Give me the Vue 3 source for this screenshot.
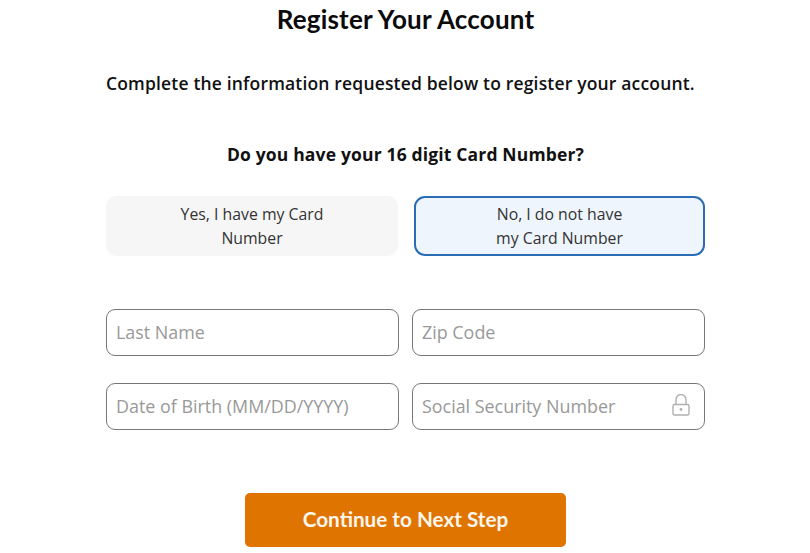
<template>
  <main class="page">
    <h1 class="title">Register Your Account</h1>
    <p class="intro">Complete the information requested below to register your account.</p>
    <h2 class="question">Do you have your 16 digit Card Number?</h2>

    <div class="choices">
      <button type="button" class="choice">Yes, I have my Card<br />Number</button>
      <button type="button" class="choice selected">No, I do not have<br />my Card Number</button>
    </div>

    <form class="fields" @submit.prevent>
      <div v-for="field in fields" :key="field" class="field">
        <input type="text" :placeholder="field" />
        <svg v-if="field === 'Social Security Number'" class="lock" viewBox="0 0 18 22" fill="none">
          <path d="M4 10.5V5.5a5 5 0 0 1 10 0v5" />
          <rect x="1" y="10.5" width="16" height="10.5" rx="1.5" />
          <circle class="dot" cx="9" cy="15.5" r="1.4" />
        </svg>
      </div>
    </form>

    <button type="button" class="next">Continue to Next Step</button>
  </main>
</template>

<script setup>
const fields = ['Last Name', 'Zip Code', 'Date of Birth (MM/DD/YYYY)', 'Social Security Number'];
</script>

<style>
body {
  background: #fff;
}
</style>

<style scoped>
.page {
  width: 599px;
  height: 553px;
  margin-left: 106px;
  overflow: hidden;
  display: flex;
  flex-direction: column;
  align-items: center;
  font-family: "Open Sans", "Liberation Sans", sans-serif;
  color: #111;
}

.title {
  margin: 3px 0 0;
  font-family: Lato, "Open Sans", sans-serif;
  font-size: 26px;
  line-height: 32px;
  font-weight: 700;
  letter-spacing: 0.2px;
  color: #0b0b0b;
}

.intro {
  align-self: flex-start;
  margin: 36px 0 0;
  font-size: 17.5px;
  line-height: 24px;
  font-weight: 600;
  letter-spacing: 0.17px;
  white-space: nowrap;
}

.question {
  margin: 47px 0 0;
  font-size: 17.5px;
  line-height: 24px;
  font-weight: 700;
  letter-spacing: 0.16px;
}

.choices {
  width: 100%;
  margin-top: 30px;
  display: grid;
  grid-template-columns: 292px 291px;
  justify-content: space-between;
}

.choice {
  height: 60px;
  padding: 0;
  border: 2px solid #f6f6f6;
  border-radius: 11px;
  background: #f6f6f6;
  font-family: inherit;
  font-size: 15.8px;
  line-height: 24px;
  color: #333;
}

.selected {
  border-color: #2a6db5;
  background: #eef5fd;
}

.fields {
  width: 100%;
  margin-top: 53px;
  display: grid;
  grid-template-columns: 293px 293px;
  justify-content: space-between;
  row-gap: 27px;
}

.field {
  position: relative;
}

.field input {
  display: block;
  box-sizing: border-box;
  width: 100%;
  height: 47px;
  padding: 0 9px 2px;
  border: 1px solid #777;
  border-radius: 9px;
  background: #fff;
  font-family: inherit;
  font-size: 17.9px;
  outline: none;
}

.field input::placeholder {
  color: #999;
  opacity: 1;
}

.lock {
  position: absolute;
  right: 15px;
  top: 11px;
  width: 18px;
  height: 22px;
  stroke: #b0b0b0;
  stroke-width: 1.4;
}

.lock .dot {
  fill: #b0b0b0;
  stroke: none;
}

.next {
  width: 321px;
  height: 54px;
  margin-top: 63px;
  padding: 0 0 2px;
  flex: none;
  border: none;
  border-radius: 5px;
  background: #e07400;
  font-family: Lato, "Open Sans", sans-serif;
  font-size: 20.7px;
  font-weight: 700;
  color: #fdf6ec;
}
</style>
